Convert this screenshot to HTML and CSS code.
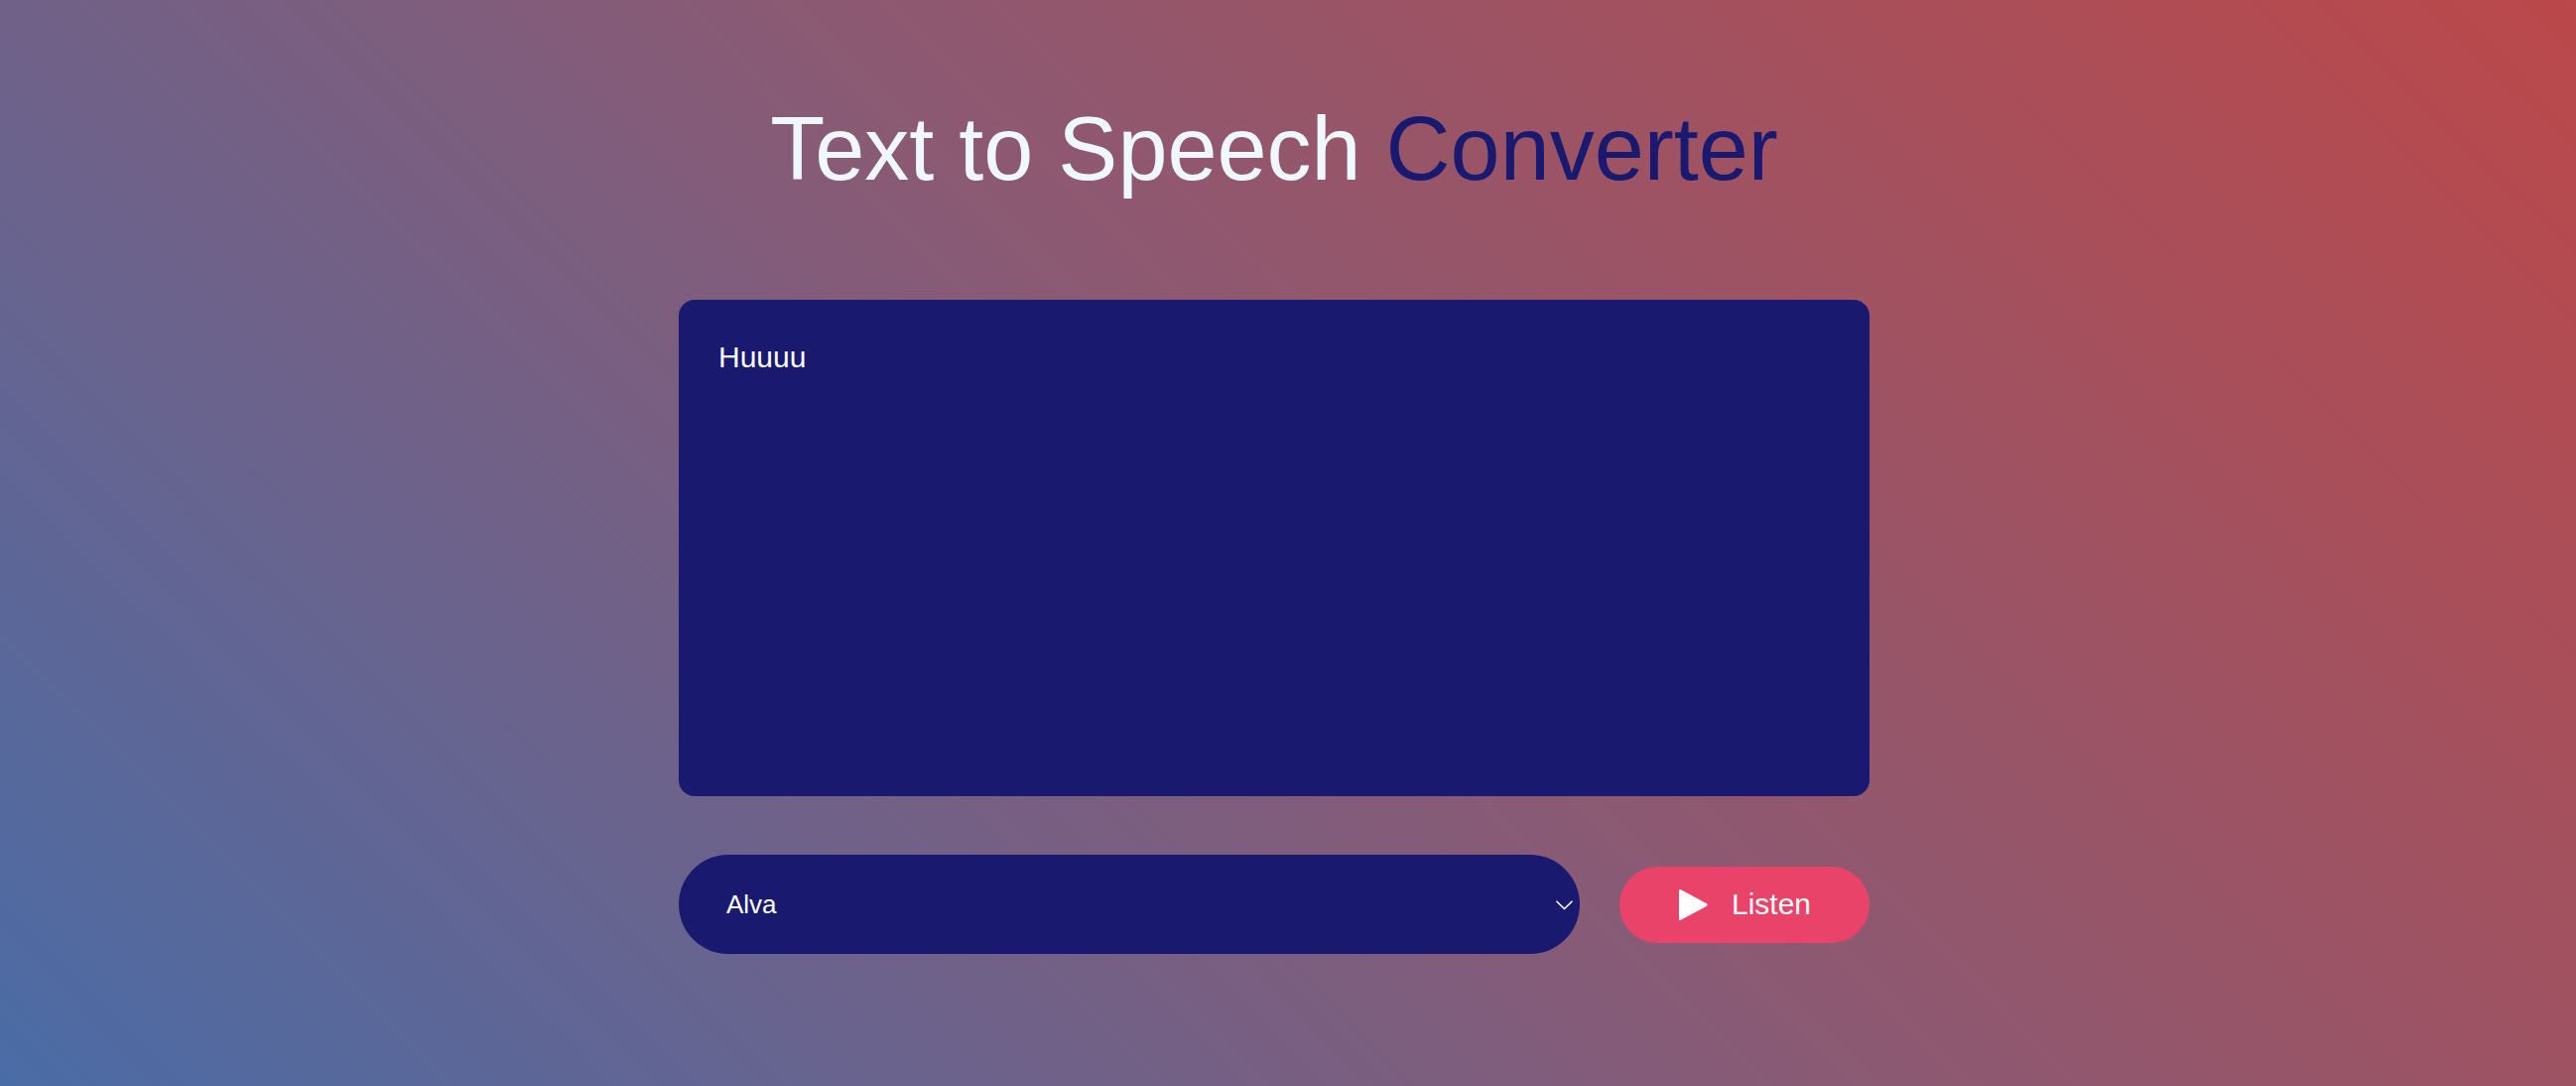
FILE: index.html
```html
<!DOCTYPE html>
<html lang="en">
<head>
<meta charset="utf-8">
<title>Text to Speech Converter</title>
<link rel="stylesheet" href="styles.css">
</head>
<body>
<main class="app">
  <h1 class="title">Text to Speech <span class="accent">Converter</span></h1>
  <textarea class="input" spellcheck="true">Huuuu</textarea>
  <div class="controls">
    <div class="select-wrap">
      <select class="voice">
        <option>Alva</option>
      </select>
      <svg class="chevron" width="17" height="10" viewBox="0 0 17 10"><path d="M1 1.2 L8.5 8.5 L16 1.2" fill="none" stroke="#fff" stroke-width="1.6" stroke-linecap="round" stroke-linejoin="round"/></svg>
    </div>
    <button class="listen" type="button">
      <svg class="play" width="31" height="35" viewBox="0 0 31 35"><path d="M3 2.2 Q1 1 1 3.3 L1 31.7 Q1 34 3 32.8 L29 18.7 Q30.6 17.5 29 16.3 Z" fill="#fff"/></svg>
      <span>Listen</span>
    </button>
  </div>
</main>
</body>
</html>
```

FILE: styles.css
```css
html, body {
  margin: 0;
  height: 100%;
}

body {
  background: linear-gradient(45deg, #4a6ca6 0%, #8a5a74 50%, #bb484a 100%);
  font-family: "Liberation Sans", Arial, Helvetica, sans-serif;
  padding-right: 28px;
  box-sizing: border-box;
}

.app {
  width: 1200px;
  margin: 0 auto;
  padding-top: 99px;
  display: flex;
  flex-direction: column;
}

.title {
  margin: 0;
  text-align: center;
  font-size: 90px;
  font-weight: 400;
  line-height: normal;
  color: #f0f8ff;
}

.accent {
  color: #191970;
}

.input {
  margin-top: 100px;
  width: 1200px;
  height: 500px;
  box-sizing: border-box;
  background: #191970;
  color: #fff;
  border: none;
  border-radius: 16px;
  padding: 41px 40px 40px;
  font-family: "Liberation Sans", Arial, sans-serif;
  font-size: 30px;
  resize: none;
  outline: none;
}

.controls {
  margin-top: 59px;
  display: flex;
  align-items: center;
  gap: 40px;
}

.select-wrap {
  position: relative;
  width: 908px;
  height: 100px;
}

.voice {
  appearance: none;
  -webkit-appearance: none;
  width: 100%;
  height: 100%;
  border: none;
  border-radius: 50px;
  background: #191970;
  color: #fff;
  font-family: "Liberation Sans", Arial, sans-serif;
  font-size: 26px;
  padding: 0 48px;
  outline: none;
}

.chevron {
  position: absolute;
  right: 7px;
  top: 46px;
}

.listen {
  width: 252px;
  height: 77px;
  border: none;
  border-radius: 39px;
  background: #e9436a;
  color: #fff;
  display: flex;
  align-items: center;
  justify-content: center;
  gap: 23px;
  padding: 0;
  font-family: "Liberation Sans", Arial, sans-serif;
  font-size: 30px;
  cursor: pointer;
}

.play {
  display: block;
}
```
